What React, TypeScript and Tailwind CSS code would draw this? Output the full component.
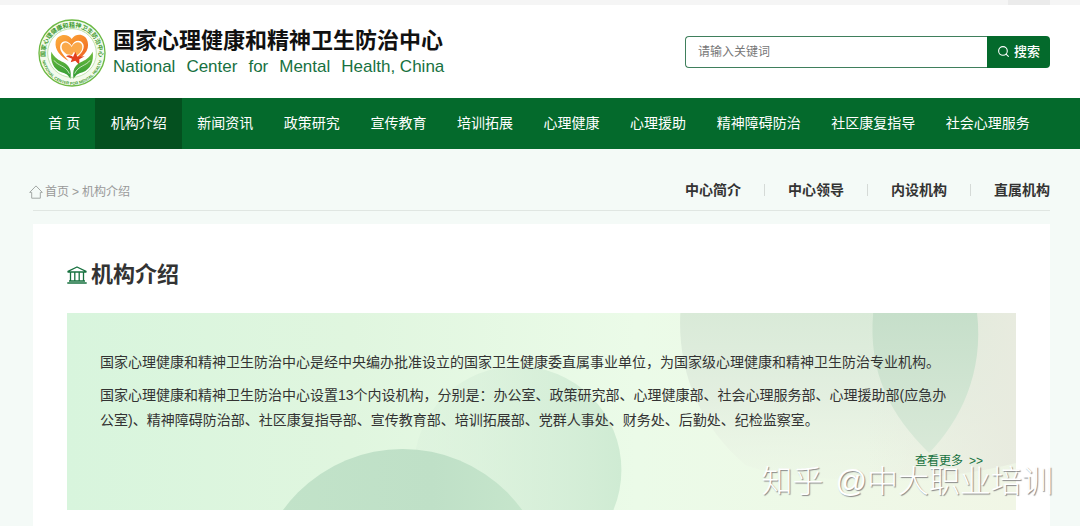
import { Search } from "lucide-react";

const navItems = [
  "首 页",
  "机构介绍",
  "新闻资讯",
  "政策研究",
  "宣传教育",
  "培训拓展",
  "心理健康",
  "心理援助",
  "精神障碍防治",
  "社区康复指导",
  "社会心理服务",
];

const subItems = ["中心简介", "中心领导", "内设机构", "直属机构"];

function Emblem() {
  return (
    <svg viewBox="0 0 204 204" className="h-[68px] w-[68px] shrink-0">
      <defs>
        <linearGradient id="heart" x1="0" y1="0" x2="1" y2="1">
          <stop offset="0" stopColor="#fbb040" />
          <stop offset="0.5" stopColor="#f7892b" />
          <stop offset="1" stopColor="#ec5a24" />
        </linearGradient>
        <linearGradient id="hand" x1="0" y1="0" x2="0" y2="1">
          <stop offset="0" stopColor="#6fbb3c" />
          <stop offset="1" stopColor="#2f9a35" />
        </linearGradient>
        <path id="ringTop" d="M 24 122 A 80 80 0 1 1 180 122" />
        <path id="ringBottom" d="M 11 106 A 91 91 0 0 0 193 106" />
      </defs>
      <circle cx="102" cy="102" r="99" fill="#f3faec" stroke="#6cb944" strokeWidth="4" />
      <circle cx="102" cy="102" r="73" fill="#fff" stroke="#a9d68c" strokeWidth="2" />
      <text
        fontSize="18"
        fontWeight="700"
        fill="#3f9a2f"
        className="font-['Noto_Sans_CJK_SC',sans-serif]"
      >
        <textPath href="#ringTop" startOffset="50%" textAnchor="middle">
          国家心理健康和精神卫生防治中心
        </textPath>
      </text>
      <text
        fontSize="12"
        fontWeight="700"
        fill="#3f9a2f"
        className="font-['Liberation_Sans',sans-serif]"
      >
        <textPath href="#ringBottom" startOffset="50%" textAnchor="middle">
          NATIONAL CENTER FOR MENTAL HEALTH
        </textPath>
      </text>
      <path
        fill="url(#heart)"
        d="M101 60 C90 42 58 44 53 68 C49 92 68 112 92 126 C72 104 62 92 68 76 C74 62 92 64 101 80 C107 64 128 58 136 76 C142 92 126 110 104 124 C134 118 156 94 149 68 C142 42 112 42 101 60 Z"
      />
      <path
        fill="#fba94a"
        d="M72 78 C77 66 92 68 101 84 C107 68 127 64 132 78 C136 92 126 104 116 110 L108 98 L102 108 L86 106 C76 98 68 90 72 78 Z"
      />
      <path
        fill="#e2401f"
        d="M84 112 C92 106 100 108 105 114 L112 99 L118 113 L140 112 L124 121 L124 138 L112 125 L98 130 L102 119 Z"
      />
      <path
        fill="url(#hand)"
        d="M40 98 C50 118 62 122 76 130 C94 140 102 154 97 180 C92 168 84 164 70 160 C46 150 36 126 40 98 Z"
      />
      <path
        fill="url(#hand)"
        d="M164 98 C154 118 142 122 128 130 C110 140 102 154 107 180 C112 168 120 164 134 160 C158 150 168 126 164 98 Z"
      />
      <path
        fill="none"
        stroke="#fff"
        strokeWidth="2"
        d="M48 124 C58 140 84 140 94 164 M156 124 C146 140 120 140 110 164"
      />
    </svg>
  );
}

function HomeIcon() {
  return (
    <svg
      viewBox="0 0 14 14"
      className="h-[14px] w-[14px]"
      fill="none"
      stroke="#a3a8a5"
      strokeLinejoin="round"
    >
      <path d="M0.7 7.4 L7 0.9 L13.3 7.4 H11.3 V13.2 H2.7 V7.4 Z" />
    </svg>
  );
}

function BankIcon() {
  return (
    <svg
      viewBox="0 0 20 18"
      className="h-[18px] w-5"
      fill="none"
      stroke="#17713f"
      strokeWidth="1.3"
      strokeLinejoin="round"
    >
      <path d="M1 5.4 L10 1 L19 5.4 V6 H1 Z" />
      <path d="M3.5 6 V15 M7.8 6 V15 M12.2 6 V15 M16.5 6 V15" />
      <path d="M2 15 H18 M0.3 17 H19.7" />
    </svg>
  );
}

function BannerArt() {
  return (
    <svg
      viewBox="0 0 950 197"
      preserveAspectRatio="none"
      className="absolute inset-0 h-full w-full"
      aria-hidden="true"
    >
      <defs>
        <linearGradient id="base" x1="0" y1="0" x2="1" y2="0">
          <stop offset="0" stopColor="#d8f5dd" />
          <stop offset="0.3" stopColor="#e0f6df" />
          <stop offset="0.6" stopColor="#ebfbe8" />
          <stop offset="1" stopColor="#f1f6e6" />
        </linearGradient>
        <linearGradient id="disc" x1="0" y1="0" x2="1" y2="0">
          <stop offset="0" stopColor="#d9efdb" stopOpacity="0.4" />
          <stop offset="1" stopColor="#cfebd3" />
        </linearGradient>
        <linearGradient id="hill" x1="0" y1="0" x2="1" y2="0">
          <stop offset="0" stopColor="#c2e3c9" />
          <stop offset="0.6" stopColor="#bfe0c7" />
          <stop offset="1" stopColor="#c8e7cd" />
        </linearGradient>
        <linearGradient id="petal" x1="0" y1="0" x2="0" y2="1">
          <stop offset="0" stopColor="#d9ead8" />
          <stop offset="0.5" stopColor="#e3efe0" />
          <stop offset="1" stopColor="#ebf4e5" stopOpacity="0.3" />
        </linearGradient>
        <linearGradient id="edge" x1="0" y1="0" x2="1" y2="0">
          <stop offset="0" stopColor="#e8ebdf" stopOpacity="0" />
          <stop offset="1" stopColor="#e8ebdf" />
        </linearGradient>
        <linearGradient id="leaf" x1="0" y1="0" x2="0" y2="1">
          <stop offset="0" stopColor="#c6dfca" />
          <stop offset="1" stopColor="#d9e9d8" />
        </linearGradient>
      </defs>
      <rect width="950" height="197" fill="url(#base)" />
      <circle cx="451" cy="157" r="104" fill="url(#disc)" />
      <circle cx="336" cy="284" r="148" fill="url(#hill)" />
      <path
        fill="url(#petal)"
        d="M614 0 C611 56 632 112 679 152 C720 168 840 172 950 164 V0 Z"
      />
      <path fill="url(#edge)" d="M800 0 H950 V150 Q880 168 800 164 Z" />
      <path
        fill="url(#leaf)"
        d="M807 0 C802 60 824 102 863 140 C894 108 918 60 911 0 Z"
      />
    </svg>
  );
}

export default function App() {
  return (
    <div className="relative bg-[#f4faf7] font-['Liberation_Sans','Noto_Sans_CJK_SC',sans-serif] text-[#333]">
      <div className="flex h-[5px] justify-end bg-[#f5f5f5] pr-[30px]">
        <div className="w-[42px] bg-[#ebebeb]" />
      </div>

      <header className="flex h-[93px] items-center justify-between bg-white pr-[30px] pl-[38px]">
        <div className="flex items-center gap-[7px] pt-[3px]">
          <Emblem />
          <div>
            <h1 className="text-[22px] leading-7 font-bold text-[#111]">
              国家心理健康和精神卫生防治中心
            </h1>
            <p className="flex gap-[11px] text-[17px] leading-6 text-[#17713f]">
              <span>National</span>
              <span>Center</span>
              <span>for</span>
              <span>Mental</span>
              <span>Health, China</span>
            </p>
          </div>
        </div>
        <form className="flex h-8 w-[365px]" onSubmit={(e) => e.preventDefault()}>
          <input
            type="text"
            aria-label="请输入关键词"
            placeholder="请输入关键词"
            className="min-w-0 flex-1 rounded-l border border-r-0 border-[#3f7f5c] bg-white px-3 text-xs placeholder:text-[#777]"
          />
          <button
            type="submit"
            className="flex w-[63px] items-center justify-center gap-1 rounded-r bg-[#046a2c] text-[13px] font-medium text-white"
          >
            <Search className="h-[13px] w-[13px]" />
            搜索
          </button>
        </form>
      </header>

      <nav className="bg-[#046a2c] pr-[35px] pl-[33px]">
        <ul className="flex">
          {navItems.map((item) => (
            <li key={item} className="flex-auto">
              <a
                href="#"
                className={
                  item === "机构介绍"
                    ? "block bg-[#04501f] text-center text-sm leading-[51px] whitespace-nowrap text-white"
                    : "block text-center text-sm leading-[51px] whitespace-nowrap text-white"
                }
              >
                <span className="px-[15px]">{item}</span>
              </a>
            </li>
          ))}
        </ul>
      </nav>

      <main className="pr-[30px] pl-[33px]">
        <div className="flex h-[62px] items-end justify-between border-b border-[#e0e6e2] pb-2">
          <div className="-ml-1 flex items-center gap-[2px] text-xs leading-5 text-[#999]">
            <HomeIcon />
            <a href="#">首页</a>
            <span className="px-px">&gt;</span>
            <a href="#">机构介绍</a>
          </div>
          <ul className="flex items-center">
            {subItems.map((item, i) => (
              <li key={item} className="flex items-center">
                {i > 0 && <span className="mx-[23px] h-3 w-px bg-[#d5dad7]" />}
                <a href="#" className="text-sm leading-6 font-bold">
                  {item}
                </a>
              </li>
            ))}
          </ul>
        </div>

        <section className="mt-[13px] bg-white px-[34px] pt-[35px] pb-4">
          <h2 className="flex items-center gap-1 text-[22px] leading-8 font-bold">
            <BankIcon />
            机构介绍
          </h2>
          <div className="relative mt-[22px]">
            <BannerArt />
            <div className="relative px-[33px] pt-[37px] pb-[39px] text-sm leading-[25px]">
              <p className="max-w-[858px]">
                国家心理健康和精神卫生防治中心是经中央编办批准设立的国家卫生健康委直属事业单位，为国家级心理健康和精神卫生防治专业机构。
              </p>
              <p className="mt-2 max-w-[858px]">
                国家心理健康和精神卫生防治中心设置13个内设机构，分别是：办公室、政策研究部、心理健康部、社会心理服务部、心理援助部(应急办公室)、精神障碍防治部、社区康复指导部、宣传教育部、培训拓展部、党群人事处、财务处、后勤处、纪检监察室。
              </p>
              <div className="mt-[18px] flex justify-end text-xs leading-5">
                <a href="#" className="flex gap-[6px] text-[#17713f]">
                  <span>查看更多</span>
                  <span>&gt;&gt;</span>
                </a>
              </div>
            </div>
          </div>
        </section>
      </main>

      <div className="pointer-events-none absolute right-[27px] bottom-6 flex gap-3 text-[31px] leading-10 font-light whitespace-nowrap text-white [text-shadow:1px_1px_1px_#888]">
        <span>知乎</span>
        <span>@中大职业培训</span>
      </div>
    </div>
  );
}
